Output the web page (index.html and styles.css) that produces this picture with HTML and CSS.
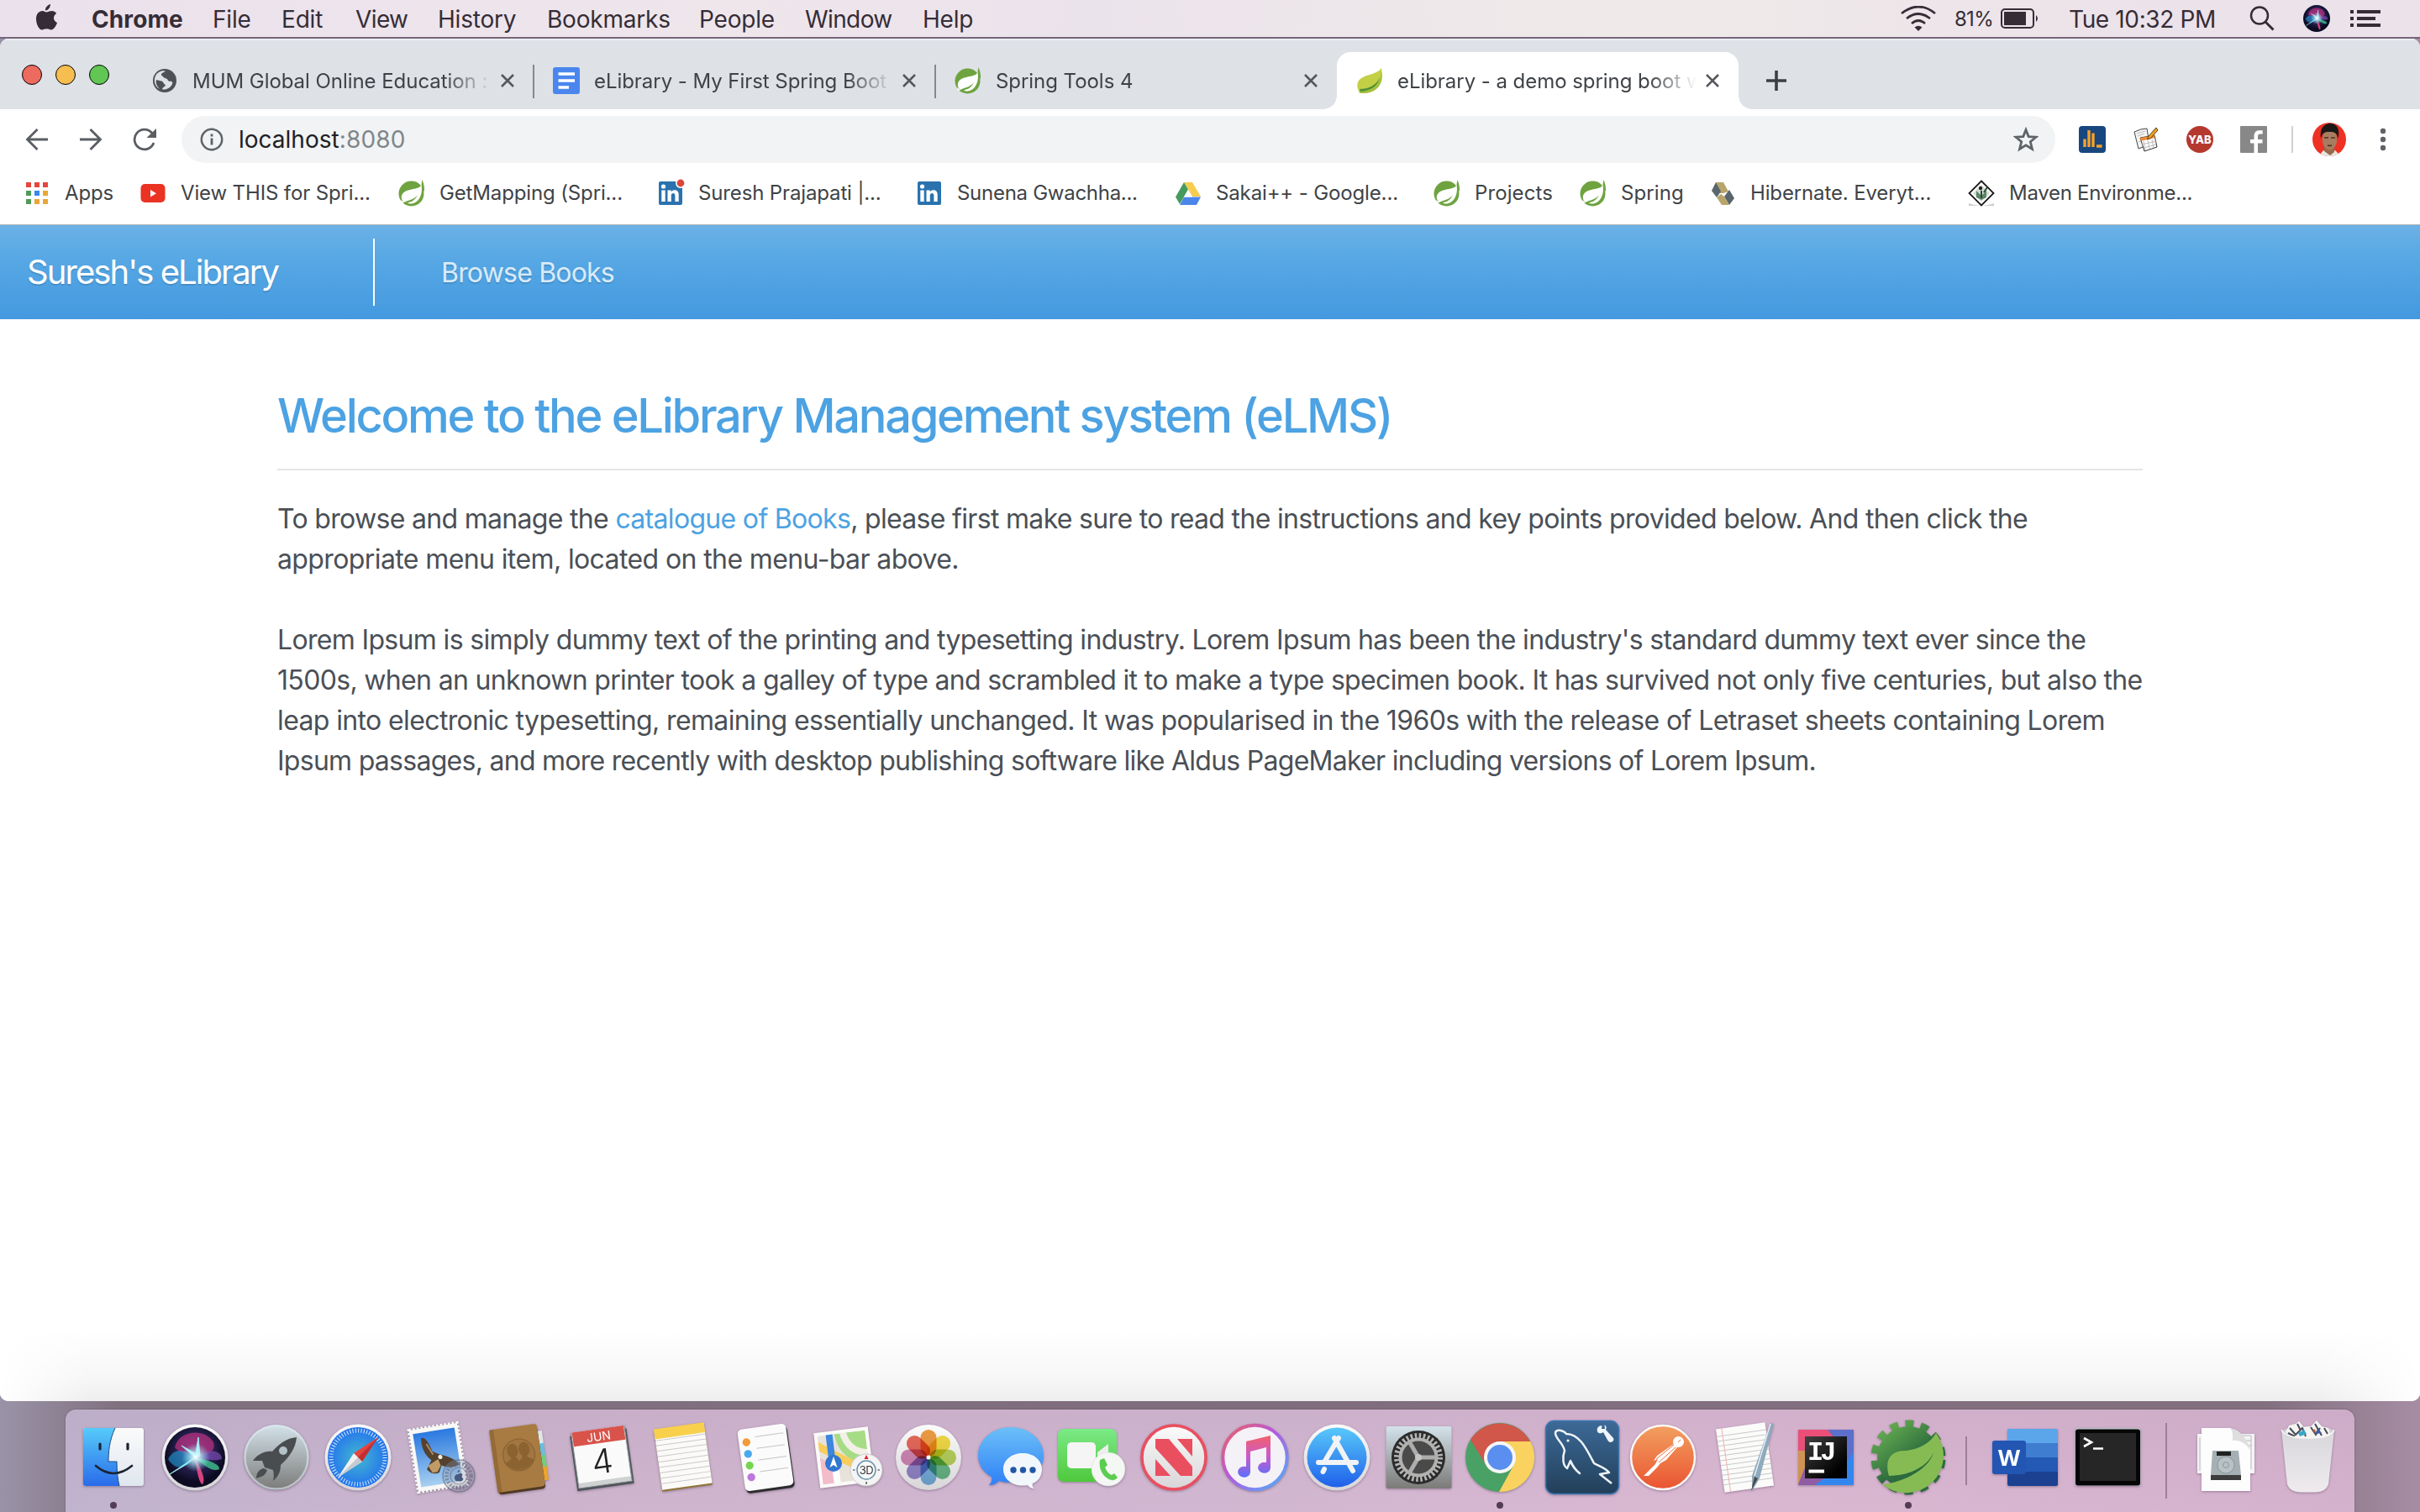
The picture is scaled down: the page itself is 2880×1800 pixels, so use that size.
FILE: index.html
```html
<!DOCTYPE html>
<html lang="en">
<head>
<meta charset="utf-8">
<title>eLibrary - a demo spring boot web app</title>
<link rel="stylesheet" href="styles.css">
</head>
<body>
<svg class="defs" aria-hidden="true">
  <defs>
    <linearGradient id="finderL" x1="0" y1="0" x2="0" y2="1"><stop offset="0" stop-color="#56cbfa"/><stop offset="1" stop-color="#2a6bea"/></linearGradient>
    <linearGradient id="paper" x1="0" y1="0" x2="0" y2="1"><stop offset="0" stop-color="#fbfbfb"/><stop offset="1" stop-color="#dfe6ee"/></linearGradient>
    <linearGradient id="rim" x1="0" y1="0" x2="0" y2="1"><stop offset="0" stop-color="#fbfbfb"/><stop offset="1" stop-color="#d8d5d8"/></linearGradient>
    <linearGradient id="silver" x1="0" y1="0" x2="0" y2="1"><stop offset="0" stop-color="#d3e2ea"/><stop offset="1" stop-color="#7b7a78"/></linearGradient>
    <radialGradient id="safari"><stop offset="0" stop-color="#43b8cf"/><stop offset="1" stop-color="#2372ee"/></radialGradient>
    <linearGradient id="sky" x1="0" y1="0" x2="0" y2="1"><stop offset="0" stop-color="#2b79e0"/><stop offset="1" stop-color="#a8d0f0"/></linearGradient>
    <linearGradient id="msg" x1="0" y1="0" x2="0" y2="1"><stop offset="0" stop-color="#6cc0f8"/><stop offset="1" stop-color="#2f80f6"/></linearGradient>
    <linearGradient id="ft" x1="0" y1="0" x2="0" y2="1"><stop offset="0" stop-color="#7bea86"/><stop offset="1" stop-color="#4fc83c"/></linearGradient>
    <linearGradient id="store" x1="0" y1="0" x2="0" y2="1"><stop offset="0" stop-color="#58c8fa"/><stop offset="1" stop-color="#1f60ea"/></linearGradient>
    <linearGradient id="tunes" x1="0" y1="0" x2="1" y2="1"><stop offset="0" stop-color="#f0605a"/><stop offset=".45" stop-color="#b35ae0"/><stop offset="1" stop-color="#4ab4f8"/></linearGradient>
    <linearGradient id="note" x1="0" y1="0" x2="0" y2="1"><stop offset="0" stop-color="#f3606a"/><stop offset=".5" stop-color="#c95bcb"/><stop offset="1" stop-color="#5b70fa"/></linearGradient>
    <linearGradient id="sql" x1="0" y1="0" x2="0" y2="1"><stop offset="0" stop-color="#3d6a98"/><stop offset="1" stop-color="#223f59"/></linearGradient>
    <linearGradient id="post" x1="0" y1="0" x2="0" y2="1"><stop offset="0" stop-color="#f2a060"/><stop offset="1" stop-color="#ea5431"/></linearGradient>
    <linearGradient id="gear" gradientUnits="userSpaceOnUse" x1="20" y1="15" x2="66" y2="70"><stop offset="0" stop-color="#62a850"/><stop offset=".7" stop-color="#2c6b3d"/></linearGradient>
    <radialGradient id="siri" cx=".5" cy=".4"><stop offset="0" stop-color="#5a4f9e"/><stop offset=".6" stop-color="#26204f"/><stop offset="1" stop-color="#0d0b22"/></radialGradient>
    <radialGradient id="glow"><stop offset="0" stop-color="#fff"/><stop offset=".3" stop-color="#c8f4fb" stop-opacity=".8"/><stop offset="1" stop-color="#7fe6f0" stop-opacity="0"/></radialGradient>
    <linearGradient id="ijbg" x1="0" y1="0" x2="1" y2="1"><stop offset="0" stop-color="#414141"/><stop offset=".8" stop-color="#000"/></linearGradient>
    <linearGradient id="trash" x1="0" y1="0" x2="0" y2="1"><stop offset="0" stop-color="#dcdcde"/><stop offset="1" stop-color="#f4f2f4"/></linearGradient>
    <symbol id="spring" viewBox="0 0 32 32">
      <circle cx="15.500" cy="16.500" r="15" fill="#6ea33f"/>
      <path d="M28.500 0 C31 6 31 10 31 14 L27 9Z" fill="#6ea33f"/>
      <path d="M27.500 6 C25 12 15 10 8 14 C2 18 3 24 7 27 C11 24 19 24 23 18 C19 27 13 26 11 28 C22 31 30 20 27.500 6Z" fill="#fff"/>
      <path d="M3 24 L7 27 L4 28Z" fill="#fff"/>
    </symbol>
    <symbol id="close" viewBox="0 0 18 18"><path d="M2 2 L16 16 M16 2 L2 16" stroke="#54585c" stroke-width="2.600" fill="none"/></symbol>
    <symbol id="linkedin" viewBox="0 0 32 32">
      <rect x="2" y="2" width="28" height="28" rx="2" fill="#2a72ae"/>
      <circle cx="7.500" cy="8" r="2.600" fill="#fff"/>
      <path d="M5.300 12.500h4.400V26H5.300Z M12.500 12.500h4.200v2c2-3.500 9-3.300 9 3V26h-4.300v-7.500c0-3.500-4.600-3.300-4.600 0V26h-4.300Z" fill="#fff"/>
    </symbol>
    <symbol id="siriball" viewBox="0 0 96 96">
      <circle cx="48" cy="48" r="36" fill="url(#siri)"/>
      <path d="M24 36 C28 16 60 12 70 30 C74 42 62 44 48 48 C38 42 30 44 24 36Z" fill="#b6307e" opacity=".75"/>
      <path d="M16 50 C24 34 40 40 48 48 C40 60 26 66 16 50Z" fill="#1fa0d8" opacity=".6"/>
      <path d="M50 48 C64 36 80 40 80 50 C74 52 62 52 50 48Z" fill="#7a4cb5" opacity=".7"/>
      <path d="M50 49 C62 50 78 56 77 62 C70 66 58 58 50 49Z" fill="#3cb98a" opacity=".85"/>
      <path d="M48 48 C54 60 62 74 57 80 C52 78 50 60 48 48Z" fill="#d8427f"/>
      <path d="M48 48 L18 68 C28 62 38 57 48 48Z M48 48 L52 24 L54 46Z M48 48 L32 34 L54 46Z" fill="#b6f6f6" stroke="#9eeef0" stroke-width="1"/>
      <circle cx="49" cy="48" r="17" fill="url(#glow)"/>
    </symbol>
  </defs>
</svg>

<header class="menubar">
  <svg class="apple" viewBox="0 0 26 32"><path d="M18 1 C18 5 15 8.500 12 8.500 C11.500 5 15 1.500 18 1Z M13 10.500 C15 10.500 16.500 9 19.500 9 C22 9 24 10.300 25.200 12 C20.500 15 21.200 21 26 23 C24.500 27.500 21.500 31.500 19 31.500 C17 31.500 16 30.300 13.500 30.300 C11 30.300 10 31.500 8 31.500 C4.500 31.500 1 25 1 18.500 C1 12.500 4.500 9 8.500 9 C10.500 9 12 10.500 13 10.500Z" fill="#352d36"/></svg>
  <nav class="menus">
    <b>Chrome</b><span>File</span><span>Edit</span><span class="tight">View</span><span>History</span><span>Bookmarks</span><span>People</span><span class="tight">Window</span><span>Help</span>
  </nav>
  <div class="status">
    <svg width="44" height="30" viewBox="0 0 44 30"><g fill="none" stroke="#352d36" stroke-width="2.700"><path d="M2 9 Q22 -7 42 9"/><path d="M8 15 Q22 4 36 15"/><path d="M14 21 Q22 14 30 21"/></g><path d="M17.500 25.500 Q22 22 26.500 25.500 L22 30Z" fill="#352d36"/></svg>
    <span class="percent">81%</span>
    <svg class="battery" width="46" height="24" viewBox="0 0 46 24"><rect x="1" y="1" width="38" height="22" rx="4" fill="none" stroke="#352d36" stroke-width="2"/><rect x="4" y="4" width="26" height="16" fill="#352d36"/><path d="M42 8 Q46 12 42 16Z" fill="#352d36"/></svg>
    <span class="clock">Tue 10:32 PM</span>
    <svg class="search" width="30" height="30" viewBox="0 0 30 30"><circle cx="12" cy="11.500" r="10" fill="none" stroke="#352d36" stroke-width="2.500"/><path d="M19 19 L28.500 28.500" stroke="#352d36" stroke-width="3"/></svg>
    <svg class="siri-mini" width="32" height="32" viewBox="10 10 76 76"><circle cx="48" cy="48" r="38" fill="#0c1030"/><use href="#siriball" width="96" height="96"/></svg>
    <svg class="list" width="36" height="20" viewBox="0 0 36 20"><path d="M0 2h4M8 2h28M0 10h4M8 10h22M0 18h4M8 18h28" stroke="#352d36" stroke-width="4"/></svg>
  </div>
</header>

<section class="window">
  <div class="tabstrip">
    <div class="lights"><i class="red"></i><i class="yellow"></i><i class="green"></i></div>
    <div class="tab split">
      <svg width="32" height="32" viewBox="0 0 32 32"><circle cx="16" cy="16" r="14" fill="#4e5256"/><path d="M17 5 C12 7 10 9 14 11 C15 14 19 12 20 16 L22 17 C25 16 27 19 23 23 C20 26 16 27 13 26.500 C13 24 17 23 17 21 C14 20 15 17 12 16.500 L6 15 C5 19 7 23 10 26 C2 22 2 10 9 6 C12 4 15 4 17 5Z" fill="#dee1e6"/></svg>
      <span class="title">MUM Global Online Education :</span><svg class="x"><use href="#close"/></svg>
    </div>
    <div class="tab split">
      <svg width="32" height="32" viewBox="0 0 32 32"><rect width="32" height="32" rx="3" fill="#4a86ee"/><path d="M6.500 8h19.500M6.500 16h19.500M6.500 24h12.500" stroke="#fff" stroke-width="3.600"/></svg>
      <span class="title">eLibrary - My First Spring Boot</span><svg class="x"><use href="#close"/></svg>
    </div>
    <div class="tab">
      <svg width="32" height="32"><use href="#spring"/></svg>
      <span class="title">Spring Tools 4</span><svg class="x"><use href="#close"/></svg>
    </div>
    <div class="tab active">
      <svg width="32" height="32" viewBox="0 0 32 32"><path d="M30 1 C24 10 6 8 2 18 C0 24 3 28 4 31 C20 32 34 24 30 1Z" fill="#c3d046"/><path d="M30 4 C30 18 20 28 4 28 L5 31 C22 32 34 22 30 4Z" fill="#a4c03c"/><path d="M28 12 C24 22 14 26 4 26 L5 29 C18 28 26 22 28 12Z" fill="#4f8f3a"/></svg>
      <span class="title">eLibrary - a demo spring boot w</span><svg class="x"><use href="#close"/></svg>
    </div>
    <svg class="plus" width="26" height="26" viewBox="0 0 26 26"><path d="M13 1v24M1 13h24" stroke="#3c4043" stroke-width="3.600"/></svg>
  </div>

  <div class="toolbar">
    <svg width="28" height="28" viewBox="0 0 28 28"><path d="M27 14H3M14.500 2 L2.500 14 L14.500 26" fill="none" stroke="#5a5e63" stroke-width="2.800"/></svg>
    <svg width="28" height="28" viewBox="0 0 28 28"><path d="M1 14H25M13.500 2 L25.500 14 L13.500 26" fill="none" stroke="#5a5e63" stroke-width="2.800"/></svg>
    <svg width="28" height="28" viewBox="0 0 28 28"><path d="M25 18 A11.800 11.800 0 1 1 23 6.500" fill="none" stroke="#5a5e63" stroke-width="2.800"/><path d="M28 1V12H16.500Z" fill="#5a5e63"/></svg>
    <div class="omnibox">
      <svg width="28" height="28" viewBox="0 0 28 28"><circle cx="14" cy="14" r="12.200" fill="none" stroke="#5f6368" stroke-width="2.500"/><path d="M14 7.500v3M14 12.500v8" stroke="#5f6368" stroke-width="2.800"/></svg>
      <span class="url">localhost<span class="port">:8080</span></span>
      <svg class="star" width="30" height="30" viewBox="0 0 30 30"><path d="M15 3.500 L18.200 11.600 L27 12.200 L20.300 17.800 L22.500 26.500 L15 21.800 L7.500 26.500 L9.700 17.800 L3 12.200 L11.800 11.600Z" fill="none" stroke="#5f6368" stroke-width="2.800"/></svg>
    </div>
    <div class="exts">
      <svg width="32" height="32" viewBox="0 0 32 32"><rect width="32" height="32" rx="4" fill="#18467f"/><path d="M7 25V15.500M12 25V5M17 25V8.500M21 24h6.500" stroke="#f5a22b" stroke-width="3.400"/></svg>
      <svg width="32" height="32" viewBox="0 0 32 32"><path d="M2 7 Q10 3 17 3 L20 22 L7 27Z" fill="#f5f5f3" stroke="#444"/><path d="M9 14 L26 11 L29 25 L14 30Z" fill="#fff" stroke="#333"/><path d="M9 14 L26 11 L26.500 14 L10 18Z" fill="#f08a35"/><path d="M13 18l2 11M18 17l2 10M23 16l2 10M11 22l17-4M13 26l15-4M5 9l10-3M6 12l8-3M7 19l3-1" stroke="#bbb"/><path d="M28 2 L19 12 L17.500 16 L21.500 14.500 L30 5Z" fill="#eaa125" stroke="#5c4018"/></svg>
      <svg width="32" height="32" viewBox="0 0 32 32"><circle cx="16" cy="16" r="16" fill="#b5382f"/><text x="16" y="20.500" class="yab">YAB</text></svg>
      <svg width="32" height="32" viewBox="0 0 32 32"><rect width="32" height="32" rx="1" fill="#888"/><path d="M16.500 32V20.500H12V16h4.500V12c0-5 3-6.800 7-6.800h3.200v4.400H24c-2.300 0-3 .9-3 3V16h5.500v4.500H21V32Z" fill="#fff"/></svg>
    </div>
    <i class="rule"></i>
    <svg width="40" height="40" viewBox="0 0 40 40"><clipPath id="av"><circle cx="20" cy="20" r="20"/></clipPath><g clip-path="url(#av)"><rect width="40" height="40" fill="#ee3124"/><path d="M7 40 L13 33 L27 33 L34 40Z" fill="#e8e6e2"/><path d="M14 28h12v7l-5 4l-7-5Z" fill="#96694a"/><ellipse cx="20.500" cy="20" rx="8.700" ry="12.500" fill="#a87c60"/><path d="M10 19 C8 6 15 1 21 1 C30 1 33 9 30.500 19 C29 12 27 11 20 11 C14 11 12 12 10 19Z" fill="#1b1816"/><path d="M14 18h5M22 18h5M18 27q2.500 1 5 0" stroke="#4d3020" stroke-width="1.600"/></g></svg>
    <svg width="8" height="28" viewBox="0 0 8 28"><g fill="#5f6368"><circle cx="4" cy="4" r="3.200"/><circle cx="4" cy="14" r="3.200"/><circle cx="4" cy="24" r="3.200"/></g></svg>
  </div>

  <nav class="bookmarks">
    <a><svg viewBox="0 0 32 32"><path d="M3 3h6v6H3zM13 3h6v6h-6zM23 3h6v6h-6z" fill="#e4473c"/><path d="M3 13h6v6H3zM3 23h6v6H3z" fill="#4f9c58"/><path d="M13 13h6v6h-6z" fill="#3b86f0"/><path d="M23 13h6v6h-6zM13 23h6v6h-6zM23 23h6v6h-6z" fill="#e8a63a"/></svg><span>Apps</span></a>
    <a><svg viewBox="0 0 32 32"><rect x="1.500" y="5" width="29" height="22" rx="5" fill="#ea3323"/><path d="M13 12v8.500l7-4.200Z" fill="#fff"/></svg><span>View THIS for Spri...</span></a>
    <a><svg><use href="#spring"/></svg><span>GetMapping (Spri...</span></a>
    <a><svg viewBox="0 0 32 32"><use href="#linkedin"/><circle cx="28" cy="4" r="6" fill="#fff"/><circle cx="28" cy="4" r="4.400" fill="#d9483b"/></svg><span>Suresh Prajapati |...</span></a>
    <a><svg><use href="#linkedin"/></svg><span class="snug">Sunena Gwachha...</span></a>
    <a><svg viewBox="0 0 32 32"><path d="M11 3h10l10 17H21Z" fill="#f7cd4f"/><path d="M11 3l5 8.500L6 29L1 20.500Z" fill="#459b5e"/><path d="M11 20.500h20L26 30H6Z" fill="#4d86ea"/><path d="M16 12l5 8.500H11Z" fill="#fff"/></svg><span>Sakai++ - Google...</span></a>
    <a><svg><use href="#spring"/></svg><span class="wide">Projects</span></a>
    <a><svg><use href="#spring"/></svg><span class="wide">Spring</span></a>
    <a><svg viewBox="0 0 32 32"><path d="M8 3h9l6 11l-6 2H13Z" fill="#b9a56b"/><path d="M8 3l6 11l-5 7L3 13Z" fill="#59666b"/><path d="M24 12l6 10l-6 8l-6-10Z" fill="#59666b"/><path d="M14 17l4 3l6 10h-9L9 21Z" fill="#b9a56b"/></svg><span>Hibernate. Everyt...</span></a>
    <a><svg viewBox="0 0 32 32"><path d="M1 28 Q16 34 31 28 L31 31 H1Z" fill="#ccc"/><path d="M16 1.500 L30.500 16 L16 30.500 L1.500 16Z" fill="#fff" stroke="#1c1c1c" stroke-width="1.800"/><path d="M16 6 L26 16 L16 26 L6 16Z" fill="#d2dcd4"/><path d="M10 13v8l6 3l6-3v-8l-6 6Z" fill="#5d8768"/><circle cx="15" cy="10" r="2.200" fill="#222"/><path d="M19 15l4-6M16 13v9" stroke="#294a34" stroke-width="2"/></svg><span class="snug">Maven Environme...</span></a>
  </nav>

  <div class="page">
    <nav class="sitebar">
      <a class="brand">Suresh's eLibrary</a>
      <a class="link">Browse Books</a>
    </nav>
    <main class="content">
      <h1>Welcome to the eLibrary Management system (eLMS)</h1>
      <p><span class="t4">To browse and manage the <a>catalogue of Books</a>, please first make sure to read the instructions and key points provided below. And then click the</span><br><span class="t1">appropriate menu item, located on the menu-bar above.</span></p>
      <p><span class="t3">Lorem Ipsum is simply dummy text of the printing and typesetting industry. Lorem Ipsum has been the industry's standard dummy text ever since the</span><br><span class="t3">1500s, when an unknown printer took a galley of type and scrambled it to make a type specimen book. It has survived not only five centuries, but also the</span><br><span class="t2">leap into electronic typesetting, remaining essentially unchanged. It was popularised in the 1960s with the release of Letraset sheets containing Lorem</span><br><span class="t5">Ipsum passages, and more recently with desktop publishing software like Aldus PageMaker including versions of Lorem Ipsum.</span></p>
    </main>
  </div>
</section>

<footer class="dock">
  <div class="app running"><svg viewBox="0 0 96 96"><rect x="12" y="13" width="72" height="69" rx="3" fill="url(#paper)"/><path d="M15 13H50C43 28 42 42 42 53H52C52 64 53 74 55 82H15a3 3 0 0 1-3-3V16a3 3 0 0 1 3-3Z" fill="url(#finderL)"/><path d="M50 13C43 28 42 42 42 53H52C52 64 53 74 55 82" fill="none" stroke="#1f4e86" stroke-width="1"/><path d="M32 32v6M65 32v6" stroke="#1c2430" stroke-width="3.200" stroke-linecap="round"/><path d="M27 58 Q48 76 70 58" fill="none" stroke="#1c2430" stroke-width="2.600" stroke-linecap="round"/></svg></div>
  <div class="app"><svg viewBox="0 0 96 96"><circle cx="48" cy="48" r="39.500" fill="url(#rim)"/><use href="#siriball"/></svg></div>
  <div class="app"><svg viewBox="0 0 96 96"><circle cx="48" cy="48" r="39" fill="url(#silver)"/><circle cx="48" cy="48" r="37.500" fill="none" stroke="#dfeaf0" stroke-opacity=".6" stroke-width="2.500"/><path d="M72 24 C60 25 51 32 43 41 C34 40 26 44 20 52 L31 52 L34 60 L44 63 C45 68 45 72 44 76 C51 70 53 64 53 57 C63 48 71 37 72 24Z M33 61 C27 62 24 67 24 73 C30 71 35 70 37 63Z" fill="#494d50"/><circle cx="56" cy="40" r="5" fill="#b4c2ca"/></svg></div>
  <div class="app"><svg viewBox="0 0 96 96"><circle cx="48" cy="48" r="39.500" fill="url(#rim)"/><circle cx="48" cy="48" r="36" fill="url(#safari)"/><circle cx="48" cy="48" r="32" fill="none" stroke="#d5ecfb" stroke-width="5" stroke-dasharray="1 2.350"/><path d="M72 24 L53 53 L43 43Z" fill="#e4453c"/><path d="M24 72 L43 43 L53 53Z" fill="#f1f1f1"/><path d="M72 24 L53 53 L48 48Z" fill="#c22f33"/><path d="M24 72 L53 53 L48 48Z" fill="#c5cbd0"/></svg></div>
  <div class="app"><svg viewBox="0 0 96 96"><g transform="rotate(-9 46 48)"><rect x="17" y="11" width="58" height="74" fill="#f8f8f6"/><rect x="17" y="11" width="58" height="74" fill="none" stroke="#f8f8f6" stroke-width="4" stroke-dasharray="2.500 2.200"/><rect x="21" y="16" width="50" height="64" fill="url(#sky)"/><path d="M30 22 C36 22 38 30 41 40 L49 45 C56 48 66 52 70 60 C64 64 56 62 49 58 L45 66 C40 68 35 66 31 60 L38 50 C32 44 28 34 30 22Z" fill="#54422f"/><path d="M33 56 L46 50 L48 58 L43 65 L37 65Z" fill="#c19b66"/><path d="M35 30 L41 44" stroke="#a98a64" stroke-width="2"/><circle cx="49" cy="48" r="2.500" fill="#f3efe6"/></g><circle cx="71" cy="70" r="19" fill="#8f93a8" fill-opacity=".3"/><g fill="none" stroke="#62697f" stroke-opacity=".6"><circle cx="71" cy="70" r="19" stroke-width="1.500"/><circle cx="71" cy="70" r="10" stroke-width="1.200"/><circle cx="71" cy="70" r="14.500" stroke-width="4.500" stroke-dasharray="2 2"/></g><path d="M72 63c0 2-1 3-2.500 3c0-2 1-3 2.500-3Z M70.500 68c2-1.500 4-1 5 .5c-1.500 1.500-1 4 1 5c-1 2.500-3 4-6 2.500c-5 2-7-8 0-8Z" fill="#46597f"/></svg></div>
  <div class="app"><svg viewBox="0 0 96 96"><g transform="rotate(-8 46 48)"><path d="M70 20h7v17h-7z" fill="#e0e5e6"/><path d="M70 35h7v16h-7z" fill="#67bfe2"/><path d="M70 49h7v16h-7z" fill="#70d07c"/><path d="M70 63h7v16h-7z" fill="#eda42e"/><rect x="16" y="15" width="56" height="74" rx="4" fill="#4f3a22"/><rect x="15" y="11" width="57" height="75" rx="4" fill="#a87b43"/><path d="M15 11h5v75h-5z" fill="#946a36"/><circle cx="46" cy="45" r="19" fill="#a27640" stroke="#86602f"/><g fill="#8a6330"><ellipse cx="39" cy="39" rx="6.500" ry="8.500"/><ellipse cx="53" cy="39" rx="6.500" ry="8.500"/><path d="M29 53 C33 50 37 50 37 45 H42 C42 50 45 50 46 53 C47 50 50 50 50 45 H55 C55 50 59 50 63 53 C56 66 36 66 29 53Z"/></g></g></svg></div>
  <div class="app"><svg viewBox="0 0 96 96"><g transform="rotate(-8 46 48)"><path d="M13 18h68v66H13z" fill="#4d555a"/><path d="M15 15h64v66H15z" fill="#cfd2d2" stroke="#858a8c"/><path d="M16 14h62v61H16z" fill="#fafafa"/><path d="M16 14h62v17H16z" fill="#d9534a"/><text x="47" y="28" class="jun">JUN</text><text x="47" y="67" class="day">4</text></g></svg></div>
  <div class="app"><svg viewBox="0 0 96 96"><g transform="rotate(-8 47 48)"><path d="M17 12h60v73H17z" fill="#8f7434"/><path d="M17 11h60v72H17z" fill="#fbfaf8"/><path d="M17 10h60v12H17z" fill="#f8d04c"/><path d="M17 24h60" stroke="#999" stroke-dasharray="1 1"/><path d="M17 30h60m-60 6.500h60m-60 6.500h60m-60 6.500h60m-60 6.500h60m-60 6.500h60m-60 6.500h60m-60 6.500h60" stroke="#c9c9c9"/></g></svg></div>
  <div class="app"><svg viewBox="0 0 96 96"><g transform="rotate(-8 48 48)"><rect x="20" y="14" width="58" height="74" rx="5" fill="#2c2c2e"/><rect x="19" y="11" width="58" height="74" rx="5" fill="#fbfbfb"/><path d="M39 22h34M39 36h34M39 50h34M39 64h34" stroke="#c5c5c5"/><circle cx="28" cy="27" r="4.700" fill="#f29b38"/><circle cx="28" cy="41" r="4.700" fill="#49a9ee"/><circle cx="28" cy="55" r="4.700" fill="#76d550"/><circle cx="28" cy="69" r="4.700" fill="#bd77dc"/></g></svg></div>
  <div class="app"><svg viewBox="0 0 96 96"><g transform="rotate(-7 44 48)"><path d="M12 15h65v66H12z" fill="#fbfaf8"/><clipPath id="mapc"><path d="M16 19h57v58H16z"/></clipPath><g clip-path="url(#mapc)"><path d="M16 19h57v58H16z" fill="#e7e3da"/><path d="M36 19h37v40C50 56 38 40 36 19Z" fill="#a6dc86"/><path d="M46 15C48 36 60 46 80 46" fill="none" stroke="#f3f0e8" stroke-width="8"/><path d="M12 29 L70 68" stroke="#f7ce5c" stroke-width="9"/><path d="M16 45 l14 10v24H14Z" fill="#f2bccb"/><path d="M30 16v40" stroke="#3a86e0" stroke-width="8"/><path d="M33 60v20" stroke="#fff" stroke-width="8"/></g></g><circle cx="32" cy="55" r="10" fill="#3177d2"/><path d="M32 47l4.500 13l-4.500-3l-4.500 3Z" fill="#fff"/><circle cx="71" cy="63" r="19" fill="#f4f4f4" stroke="#cfcad0"/><circle cx="71" cy="63" r="11" fill="#f9fafa" stroke="#6a93ac" stroke-width="1.500"/><path d="M71 45l2.500 5h-5Z" fill="#d22"/><path d="M55 63h2.500M84.500 63h2.500M71 77v3" stroke="#333" stroke-width="1.200"/><text x="71" y="67.500" class="three">3D</text></svg></div>
  <div class="app"><svg viewBox="0 0 96 96"><circle cx="48" cy="48" r="39" fill="url(#rim)"/><g class="petals"><rect x="38.500" y="15" width="19" height="32" rx="9.500" fill="#f0922f"/><rect x="38.500" y="15" width="19" height="32" rx="9.500" fill="#f2d930" transform="rotate(45 48 48)"/><rect x="38.500" y="15" width="19" height="32" rx="9.500" fill="#b4d34c" transform="rotate(90 48 48)"/><rect x="38.500" y="15" width="19" height="32" rx="9.500" fill="#5cb77e" transform="rotate(135 48 48)"/><rect x="38.500" y="15" width="19" height="32" rx="9.500" fill="#6aaee0" transform="rotate(180 48 48)"/><rect x="38.500" y="15" width="19" height="32" rx="9.500" fill="#8d80cc" transform="rotate(225 48 48)"/><rect x="38.500" y="15" width="19" height="32" rx="9.500" fill="#cf7db0" transform="rotate(270 48 48)"/><rect x="38.500" y="15" width="19" height="32" rx="9.500" fill="#e65a4a" transform="rotate(315 48 48)"/></g><circle cx="48" cy="48" r="2.500" fill="#fff"/></svg></div>
  <div class="app"><svg viewBox="0 0 96 96"><path d="M48 12 C70 12 87 27 87 46 S70 78 48 78 C43 78 38 77 34 76 C31 79 27 81 22 81 C25 78 26 75 25 71 C15 66 9 56 9 46 C9 27 26 12 48 12Z" fill="url(#msg)"/><path d="M62 43 C75 43 85 51 85 62 C85 70 81 76 74 79 C73 82 74 83 76 85 C72 85 69 83 68 81 C52 84 39 75 39 62 C39 51 49 43 62 43Z" fill="#f2f7fc"/><g fill="#2358a5"><circle cx="51" cy="63" r="3.700"/><circle cx="62.500" cy="63" r="3.700"/><circle cx="74" cy="63" r="3.700"/></g></svg></div>
  <div class="app"><svg viewBox="0 0 96 96"><rect x="7" y="14" width="70" height="63" rx="7" fill="url(#ft)"/><rect x="18" y="30" width="34" height="31" rx="5" fill="#f5f5f5"/><path d="M54 42l13-10v28l-13-10Z" fill="#eee"/><circle cx="67" cy="62" r="20" fill="#f4f7f4" stroke="#d5d5d5" stroke-width=".5"/><path d="M57 51l5-2l4 8l-3 3q3 7 8 9l3-2l4 5q-3 4-7 3C62 73 55 63 57 51Z" fill="#5bcd50"/></svg></div>
  <div class="app"><svg viewBox="0 0 96 96"><circle cx="48" cy="48" r="38" fill="url(#rim)" stroke="#ea4f60" stroke-width="3.600"/><path d="M26 26h16l28 33v11H56L26 37Z M52 26h18v21Z M26 50l18 20H26Z" fill="#ea4f60"/></svg></div>
  <div class="app"><svg viewBox="0 0 96 96"><circle cx="47.500" cy="48" r="38.200" fill="#f5f2f7" stroke="url(#tunes)" stroke-width="4"/><path d="M37 29 L66 22 V61 A7.500 6.500 0 1 1 61 54 V36 L42 41 V66 A7.500 6.500 0 1 1 37 59Z" fill="url(#note)"/></svg></div>
  <div class="app"><svg viewBox="0 0 96 96"><circle cx="48" cy="48" r="39.500" fill="url(#rim)"/><circle cx="48" cy="48" r="35.500" fill="url(#store)"/><g stroke="#f1f3f6" stroke-width="6" stroke-linecap="round"><path d="M45 25 L67 64M50 25 L34 52M26 54 H71M33 62 L31.500 65"/></g></svg></div>
  <div class="app"><svg viewBox="0 0 96 96"><rect x="9.500" y="11" width="78" height="74" rx="2" fill="url(#silver)"/><circle cx="48" cy="48" r="32" fill="#2b2b2c"/><circle cx="48" cy="48" r="26" fill="none" stroke="#b4b4b2" stroke-width="6" stroke-dasharray="2.600 2.500"/><circle cx="48" cy="48" r="21.500" fill="#4a4a4a" stroke="#b2b2b0" stroke-width="4"/><path d="M48 48H69M48 48L37 29M48 48L37 67" stroke="#adadab" stroke-width="5"/><circle cx="48" cy="48" r="4" fill="#c6c6c4"/></svg></div>
  <div class="app running"><svg viewBox="0 0 96 96"><circle cx="48" cy="48" r="41" fill="#4aa166"/><path d="M48 48 L13 27 A41 41 0 0 1 84 29Z" fill="#d0574a"/><path d="M13 27 L32 58 L48 30Z" fill="#d0574a"/><path d="M48 29H84.500 A41 41 0 0 1 47 89 L64 58Z" fill="#f9d260"/><circle cx="48" cy="48" r="19" fill="#f7f7f7"/><circle cx="48" cy="48" r="15" fill="#5a8ff0"/></svg></div>
  <div class="app"><svg viewBox="0 0 96 96"><rect x="5.500" y="4.500" width="87" height="87" rx="10" fill="url(#sql)" stroke="#3c77b2" stroke-width="1.500"/><path d="M17 19 C17 26 26 30 28 40 C25 48 26 58 31 61 L35 52 C37 58 41 63 46 67 C41 63 38 59 35 52 M17 19 C17 14 26 15 30 20 C46 20 54 38 63 55 C68 58 76 60 81 66 L70 68 L84 79" fill="none" stroke="#eef4f9" stroke-width="2.500" stroke-linejoin="round"/><circle cx="32" cy="28" r="1.600" fill="#fff"/><path d="M72.500 10.500 C69 9 65 14 67.500 18 C70 20.500 72 19 74 18 L79.500 28 C82 32 88 29 86 25 L77 15 C79 12 76 9 75.500 9.500 L76 14 L72 14Z" fill="#eef5fb"/></svg></div>
  <div class="app"><svg viewBox="0 0 96 96"><circle cx="48" cy="48" r="38" fill="url(#post)" stroke="#fbf7f5" stroke-width="2.500"/><circle cx="66.500" cy="29.500" r="6.500" fill="#fff"/><path d="M61 32 L65 36 L52 51 L45 55 L41 60 L31 70 L25 70 L39 56 L42 50 L37 52 L41 46Z" fill="#fff"/><path d="M40 50L61 33M43 54L63 36M66 30l3-3" stroke="#ed6e41"/></svg></div>
  <div class="app"><svg viewBox="0 0 96 96"><g transform="rotate(-8 48 48)"><path d="M19 10h59v76H19z" fill="#fbfbfa"/><path d="M19 19h59m-59 5.800h59m-59 5.800h59m-59 5.800h59m-59 5.800h59m-59 5.800h59m-59 5.800h59m-59 5.800h59m-59 5.800h59m-59 5.800h59m-59 5.800h59" stroke="#c9c9c9"/><path d="M26 10v76" stroke="#f0b5b0"/></g><path d="M79 7 L83 8 L66 73 L57 88 L57 70Z" fill="#8fa9bd"/><path d="M79 8 L60 70" stroke="#e5eef3" stroke-width="1.500"/><path d="M60 71l4 2l-8 15Z" fill="#4a4a4a"/></svg></div>
  <div class="app"><svg viewBox="0 0 96 96"><path d="M14 15h66v66H14z" fill="#5b6fcb"/><path d="M14 15h35l10 12L14 42Z" fill="#ea4f78"/><path d="M14 40h14v30l-14 10Z" fill="#cf9352"/><path d="M14 80l8-20l30 10l-14 11H14Z" fill="#8e5da3"/><path d="M34 81l40-30l6-10v40Z" fill="#3486ef"/><path d="M22 23h50v50H22z" fill="url(#ijbg)"/><path d="M26.500 62.500h18.500v4H26.500z" fill="#fff"/><text x="25" y="51" class="ij">IJ</text></svg></div>
  <div class="app running"><svg viewBox="0 0 96 96"><circle cx="48" cy="48" r="40" fill="none" stroke="url(#gear)" stroke-width="9" stroke-dasharray="9.600 8.600" transform="rotate(4 48 48)"/><circle cx="48" cy="48" r="37" fill="url(#gear)"/><path d="M81 19 A44.500 44.500 0 0 1 17 80 C44 78 74 60 78 42 C72 58 50 70 25 70 C19 50 28 39 46 40 C62 38 75 30 81 19Z" fill="#86bb54"/></svg></div>
  <i class="divider"></i>
  <div class="app"><svg viewBox="0 0 96 96"><path d="M27 31V16a2 2 0 0 1 2-2h56a2 2 0 0 1 2 2v15Z" fill="#5ba5ea"/><path d="M27 31h60v17H27z" fill="#3f7dd0"/><path d="M27 48h60v17H27z" fill="#2459b5"/><path d="M27 65h60v15a2 2 0 0 1-2 2H29a2 2 0 0 1-2-2Z" fill="#1b4190"/><rect x="9" y="28" width="40" height="40" rx="3" fill="#2355b3"/><text x="29" y="58" class="word">W</text></svg></div>
  <div class="app"><svg viewBox="0 0 96 96"><rect x="10.500" y="13" width="78" height="69" rx="3" fill="#b9c4c6"/><rect x="11" y="14.500" width="77" height="67" rx="3" fill="#060606"/><path d="M16 19h67v57H16z" fill="#262626"/><path d="M21 25l9 5l-9 5M32 37.500h12" fill="none" stroke="#fff" stroke-width="2.600"/></svg></div>
  <i class="divider tall"></i>
  <div class="app"><svg viewBox="0 0 96 96"><path d="M14 20h68v47H14z" fill="#f4f4f4"/><path d="M17 24v40M66 22h12v40M66 28h12M66 34h12" stroke="#b9b9b9" fill="none"/><path d="M19 13h34c12 3 18 12 24 26v49H19Z" fill="#fdfdfd"/><path d="M53 13c4 4 3 12 3 15c8-1 16 3 21 12C74 27 66 15 53 13Z" fill="#dedede"/><path d="M32 40h31l3 29v6H30v-6Z" fill="#a5b0b4"/><path d="M30 69h36v6H30z" fill="#3d3d3d"/><path d="M37 41h17v5H37z" fill="#222"/><circle cx="48" cy="57" r="10" fill="#b9c3c7" stroke="#8a969b"/><circle cx="48" cy="57" r="3.500" fill="none" stroke="#8a969b"/></svg></div>
  <div class="app"><svg viewBox="0 0 96 96"><ellipse cx="49" cy="17" rx="31" ry="6" fill="#cfced0"/><path d="M22 18l4-8l8-2l4-3l6 7l8-1l7-7l6 7l8 2l3 9l-10 4H32Z" fill="#f4f4f3"/><path d="M27 13l7 8l8-8l4 10M52 12l6 9l5-8M57 8l8 14M36 8l4 8M68 13l4 7M25 19l8 4" stroke="#4b4b55" stroke-width="2" fill="none"/><path d="M37 19l7-4l3 5l-8 3Z" fill="#35a9c9"/><path d="M57 20l3-6l5 5Z" fill="#3b58a8"/><path d="M54 17l3-3l1 5Z" fill="#b5562c"/><path d="M17 15 L24 80 Q27 89 40 89.500 H58 Q70 89 73 80 L80 15 Q76 25 48 25 Q22 25 17 15Z" fill="url(#trash)" fill-opacity=".94"/><path d="M17 15 Q22 25 48 25 Q76 25 80 15" fill="none" stroke="#f8f8f8" stroke-width="1.500"/></svg></div>
</footer>
</body>
</html>
```
FILE: styles.css
```css
* { box-sizing: border-box; }
body {
  margin: 0;
  width: 2880px;
  height: 1800px;
  overflow: hidden;
  display: flex;
  flex-direction: column;
  font-family: Inter, "Liberation Sans", sans-serif;
  white-space: nowrap;
  background: linear-gradient(90deg, #9a93a8 0, #80717f 140px, #7f6d7e 1440px, #83707f 2700px, #a68da4 2880px);
}
svg { display: block; flex: none; }
.defs { position: absolute; width: 0; height: 0; }

.menubar {
  flex: none;
  height: 46px;
  display: flex;
  align-items: center;
  border-bottom: 2px solid #75657a;
  background: linear-gradient(90deg, #eae1ec, #efe6ec 30%, #ebe3eb 45%, #efeae9 68%, #ece2ea 90%, #ece2ea);
  color: #352d36;
  font-size: 28px;
}
.apple { width: 26px; height: 32px; margin: -4px 0 0 42px; }
.menus {
  margin-left: 41px;
  display: grid;
  grid-template-columns: 144px 82px 88px 98px 130px 181px 126px 140px 66px;
  flex: 1;
  letter-spacing: -.2px;
  padding-top: 1px;
}
.menus b { letter-spacing: .1px; }
.menus .tight { letter-spacing: -.6px; }
.status { display: flex; align-items: center; width: 619px; }
.percent { margin-left: 21px; font-size: 24px; letter-spacing: -.73px; }
.battery { margin-left: 9px; }
.clock { margin-left: 35px; letter-spacing: -.36px; padding-top: 1px; }
.search { margin-left: 40px; }
.siri-mini { margin-left: 34px; }
.list { margin-left: 24px; }

.window {
  height: 1622px;
  flex: none;
  display: flex;
  flex-direction: column;
  border-radius: 10px;
  overflow: hidden;
  background: #fff;
}
.tabstrip {
  height: 84px;
  flex: none;
  display: flex;
  align-items: flex-end;
  background: #dee1e6;
  border-top: 2px solid #eceef1;
}
.lights { width: 157px; height: 82px; padding: 29px 0 0 26px; display: flex; gap: 16px; }
.lights i { width: 24px; height: 24px; border-radius: 50%; border: 1px solid; }
.red { background: #ed6a5f; border-color: #dc5247; }
.yellow { background: #f6be50; border-color: #d9a23d; }
.green { background: #62c655; border-color: #4fae40; }
.tab {
  position: relative;
  width: 478px;
  height: 68px;
  padding-left: 23px;
  display: flex;
  align-items: center;
  font-size: 24px;
  letter-spacing: -.05px;
  color: #3f4347;
}
.tab .title {
  width: 366px;
  margin-left: 17px;
  -webkit-mask-image: linear-gradient(90deg, #000 300px, transparent 356px);
  mask-image: linear-gradient(90deg, #000 300px, transparent 356px);
}
.x { width: 18px; height: 18px; }
.split::after {
  content: "";
  position: absolute;
  right: -1px;
  top: 15px;
  width: 2px;
  height: 40px;
  background: #85898e;
}
.active { background: #fff; border-radius: 16px 16px 0 0; }
.active::before, .active::after {
  content: "";
  position: absolute;
  bottom: 0;
  width: 16px;
  height: 16px;
}
.active::before { left: -16px; background: radial-gradient(circle at 0 0, transparent 15.500px, #fff 16px); }
.active::after { right: -16px; background: radial-gradient(circle at 100% 0, transparent 15.500px, #fff 16px); }
.plus { margin: 0 0 21px 32px; }

.toolbar {
  height: 72px;
  flex: none;
  display: grid;
  grid-template-columns: 64px 64px 64px 2254px 256px 28px 60px 68px;
  padding-left: 12px;
  align-items: center;
  justify-items: center;
}
.omnibox {
  width: 2230px;
  height: 56px;
  border-radius: 28px;
  background: #f1f3f4;
  display: flex;
  align-items: center;
  padding: 0 20px 0 22px;
  font-size: 28px;
  color: #202124;
}
.url { margin-left: 18px; flex: 1; }
.port { color: #80868b; letter-spacing: .2px; }
.exts { display: grid; grid-template-columns: repeat(4, 64px); justify-items: center; }
.yab { font: 800 13px Inter, sans-serif; fill: #fff; text-anchor: middle; }
.rule { width: 2px; height: 32px; background: #cfd1d4; }

.bookmarks {
  height: 66px;
  flex: none;
  padding: 0 0 10px 28px;
  display: grid;
  grid-template-columns: 138px 308px 308px 308px 308px 308px 174px 154px 308px 308px;
  align-items: center;
  font-size: 24px;
  letter-spacing: -.14px;
  color: #3f4347;
  border-bottom: 1px solid #b3b6b8;
}
.bookmarks a { display: flex; align-items: center; gap: 17px; }
.bookmarks svg { width: 32px; height: 32px; overflow: visible; }
.snug { letter-spacing: -.28px; }
.wide { letter-spacing: .1px; }

.page {
  flex: 1;
  background: linear-gradient(90deg, #fff 0, transparent 110px, transparent 2760px, #fff 2880px), linear-gradient(#fff 0, #fff 1315px, #f7f7f7 1370px, #eee 1400px);
}
.sitebar {
  height: 112px;
  display: flex;
  align-items: center;
  background: linear-gradient(#6bb1e6, #57a8e4 35%, #4499df);
  color: #fff;
  text-shadow: 0 2px 1px rgba(0, 0, 0, .12);
}
.brand { width: 446px; height: 80px; padding-left: 32px; border-right: 2px solid #fff; font-size: 40px; line-height: 80px; letter-spacing: -1.94px; }
.link { margin-left: 79px; font-size: 32px; letter-spacing: -.8px; color: #d9ebf9; }
.content { padding: 0 330px; color: #4a4f56; font-size: 32px; line-height: 48px; }
h1 {
  margin: 0 0 34px;
  height: 180px;
  padding-top: 81px;
  border-bottom: 2px solid #e5e5e5;
  font-size: 56px;
  line-height: 68px;
  font-weight: 500;
  letter-spacing: -2.28px;
  color: #4ca2e2;
}
.content p { margin: 0 0 48px; }
.content p a { color: #4ca2e2; }
.t1 { letter-spacing: -.607px; }
.t2 { letter-spacing: -.625px; }
.t3 { letter-spacing: -.664px; }
.t4 { letter-spacing: -.683px; }
.t5 { letter-spacing: -.724px; }

.dock {
  flex: none;
  width: 2724px;
  height: 122px;
  margin: 10px 0 0 78px;
  padding: 9px 8px 0;
  display: grid;
  grid-template-columns: repeat(23, 97.100px) 42.500px 97.100px 97.100px 45px 97.100px 97.100px;
  border-radius: 12px 12px 0 0;
  background: linear-gradient(rgba(190, 160, 190, .25), rgba(225, 190, 215, .15)), linear-gradient(90deg, #bcb2cc, #ccb3cc 25%, #cfb6d0 50%, #d9b6d0 75%, #d2b0cc);
  box-shadow: 0 0 2px rgba(60, 40, 60, .5);
}
.app { display: flex; flex-direction: column; align-items: center; }
.app svg { width: 96px; height: 96px; filter: drop-shadow(0 1.500px 1.500px rgba(40, 20, 50, .35)); }
.running::after { content: ""; width: 8px; height: 8px; margin-top: 5px; border-radius: 50%; background: #553c56; }
.divider { width: 2px; height: 58px; margin: 23px auto 0; background: #9d7f9b; }
.tall { height: 90px; margin-top: 7px; }
.petals rect { mix-blend-mode: multiply; opacity: .9; }
.jun { font: 14px Inter, sans-serif; fill: #fff; text-anchor: middle; }
.day { font: 300 40px Inter, sans-serif; fill: #222; text-anchor: middle; }
.three { font: 13px Inter, sans-serif; fill: #333; text-anchor: middle; letter-spacing: -.5px; }
.ij { font: bold 32px "Liberation Mono", monospace; fill: #fff; letter-spacing: -4px; }
.word { font: bold 27px "Open Sans", sans-serif; fill: #fff; text-anchor: middle; }
```
